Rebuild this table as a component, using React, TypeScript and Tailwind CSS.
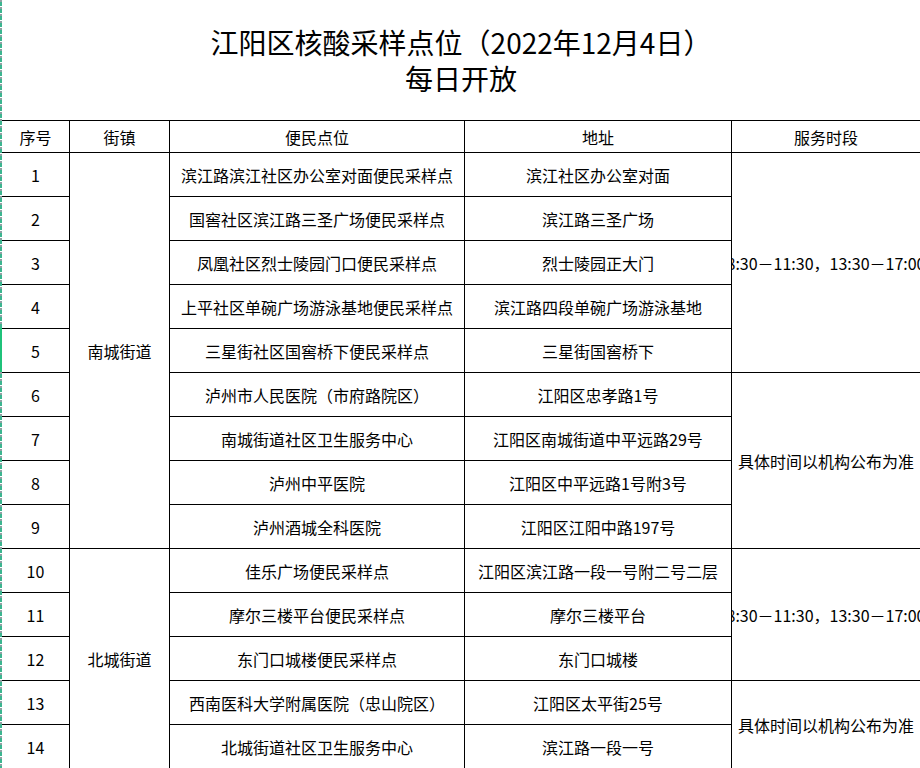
import React from "react";

type Row = { no: number; site: string; addr: string };

const rows: Row[] = [
  { no: 1, site: "滨江路滨江社区办公室对面便民采样点", addr: "滨江社区办公室对面" },
  { no: 2, site: "国窖社区滨江路三圣广场便民采样点", addr: "滨江路三圣广场" },
  { no: 3, site: "凤凰社区烈士陵园门口便民采样点", addr: "烈士陵园正大门" },
  { no: 4, site: "上平社区单碗广场游泳基地便民采样点", addr: "滨江路四段单碗广场游泳基地" },
  { no: 5, site: "三星街社区国窖桥下便民采样点", addr: "三星街国窖桥下" },
  { no: 6, site: "泸州市人民医院（市府路院区）", addr: "江阳区忠孝路1号" },
  { no: 7, site: "南城街道社区卫生服务中心", addr: "江阳区南城街道中平远路29号" },
  { no: 8, site: "泸州中平医院", addr: "江阳区中平远路1号附3号" },
  { no: 9, site: "泸州酒城全科医院", addr: "江阳区江阳中路197号" },
  { no: 10, site: "佳乐广场便民采样点", addr: "江阳区滨江路一段一号附二号二层" },
  { no: 11, site: "摩尔三楼平台便民采样点", addr: "摩尔三楼平台" },
  { no: 12, site: "东门口城楼便民采样点", addr: "东门口城楼" },
  { no: 13, site: "西南医科大学附属医院（忠山院区）", addr: "江阳区太平街25号" },
  { no: 14, site: "北城街道社区卫生服务中心", addr: "滨江路一段一号" },
];

// merged cells: [start row index, span, text]
const towns: [number, number, string][] = [
  [0, 9, "南城街道"],
  [9, 5, "北城街道"],
];
const hours: [number, number, string][] = [
  [0, 5, "8:30－11:30，13:30－17:00"],
  [5, 4, "具体时间以机构公布为准"],
  [9, 3, "8:30－11:30，13:30－17:00"],
  [12, 2, "具体时间以机构公布为准"],
];

const spanClass: Record<number, string> = {
  2: "row-span-2",
  3: "row-span-3",
  4: "row-span-4",
  5: "row-span-5",
  9: "row-span-9",
};

const cell = "bg-white flex items-center justify-center whitespace-nowrap overflow-hidden";

export default function App() {
  return (
    <div
      className="w-[920px] h-[768px] overflow-hidden bg-white flex text-black"
      style={{ fontFamily: '"Noto Sans CJK SC", "Noto Sans", sans-serif' }}
    >
      {/* left sheet edge */}
      <div className="w-[2px] shrink-0 flex flex-col">
        <div className="h-[328px] bg-[repeating-linear-gradient(to_bottom,#8fa0a3_0px,#8fa0a3_2px,#3bb58f_2px,#3bb58f_6px,#ffffff_6px,#ffffff_7px)]" />
        <div className="h-[44px] bg-[#1fc27a]" />
        <div className="flex-1 bg-[repeating-linear-gradient(to_bottom,#8fa0a3_0px,#8fa0a3_2px,#3bb58f_2px,#3bb58f_6px,#ffffff_6px,#ffffff_7px)]" />
      </div>

      <div className="flex-1 flex flex-col">
        <div className="h-[120px] flex flex-col items-center justify-center text-[28px] leading-[36px]">
          <div>江阳区核酸采样点位（2022年12月4日）</div>
          <div>每日开放</div>
        </div>

        <div className="grid grid-cols-[67px_99px_294px_266px_188px] grid-rows-[31px_repeat(14,43px)] gap-px pt-px bg-black text-[16px]">
          <div className={cell}>序号</div>
          <div className={cell}>街镇</div>
          <div className={cell}>便民点位</div>
          <div className={cell}>地址</div>
          <div className={cell}>服务时段</div>

          {rows.map((r, i) => {
            const town = towns.find((t) => t[0] === i);
            const hour = hours.find((h) => h[0] === i);
            return (
              <React.Fragment key={r.no}>
                <div className={`${cell} col-start-1`} style={{ gridRowStart: i + 2 }}>
                  {r.no}
                </div>
                {town && (
                  <div
                    className={`${cell} col-start-2 ${spanClass[town[1]]}`}
                    style={{ gridRowStart: i + 2 }}
                  >
                    {town[2]}
                  </div>
                )}
                <div className={`${cell} col-start-3`} style={{ gridRowStart: i + 2 }}>
                  {r.site}
                </div>
                <div className={`${cell} col-start-4`} style={{ gridRowStart: i + 2 }}>
                  {r.addr}
                </div>
                {hour && (
                  <div
                    className={`${cell} col-start-5 ${spanClass[hour[1]]}`}
                    style={{ gridRowStart: i + 2 }}
                  >
                    <span className="shrink-0">{hour[2]}</span>
                  </div>
                )}
              </React.Fragment>
            );
          })}
        </div>
      </div>
    </div>
  );
}
